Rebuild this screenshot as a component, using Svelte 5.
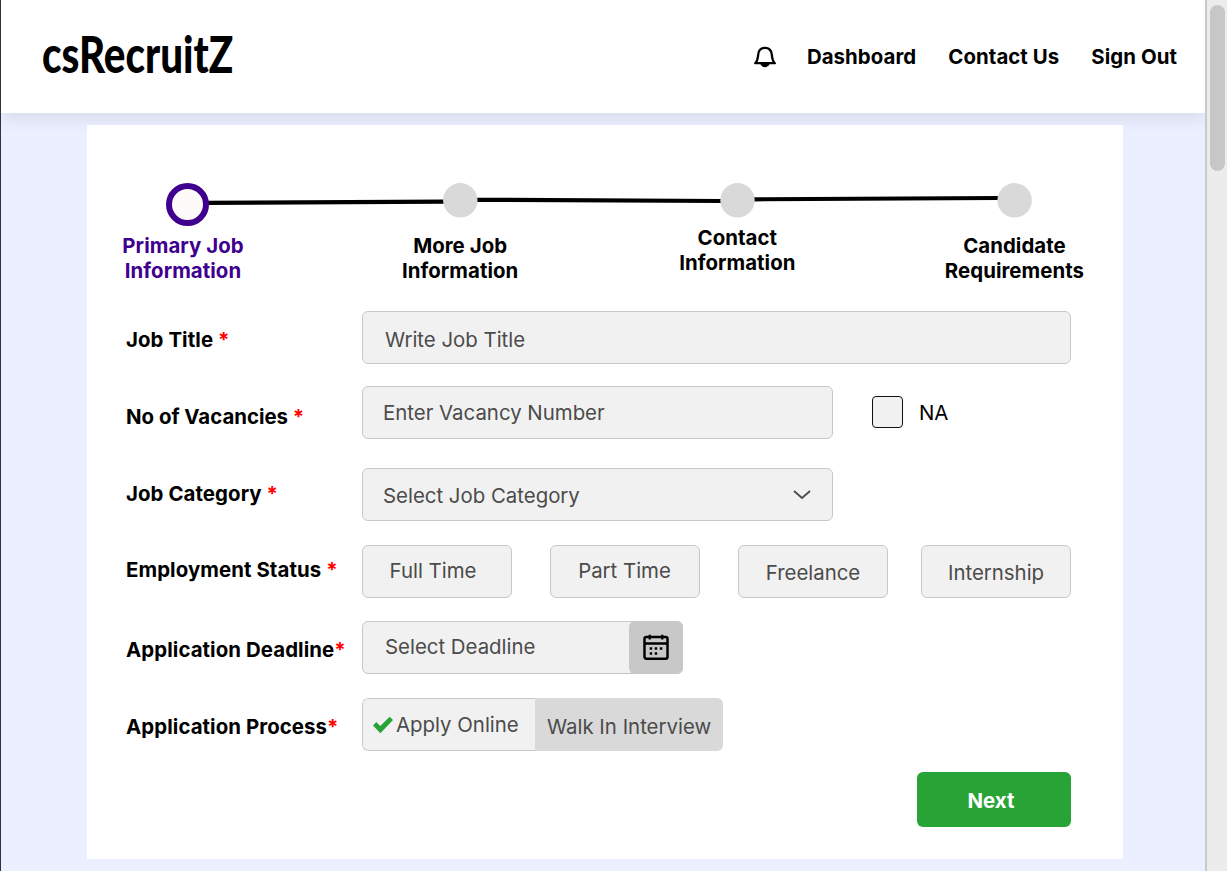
<script>
  const nav = ['Dashboard', 'Contact Us', 'Sign Out'];
  const steps = [
    ['Primary Job', 'Information'],
    ['More Job', 'Information'],
    ['Contact', 'Information'],
    ['Candidate', 'Requirements'],
  ];
</script>

<div class="window">
  <div class="page">
    <header>
      <svg class="logo" width="220" height="64" viewBox="0 0 220 64" role="img" aria-label="csRecruitZ">
        <text transform="translate(1 49) scale(0.73 1)" textLength="262" lengthAdjust="spacingAndGlyphs">csRecruitZ</text>
      </svg>
      <nav>
        <svg class="bell" width="24" height="24" viewBox="0 0 24 24">
          <path d="M2.2 18.2 C4.7 15.7 4.8 13.5 5.2 9.5 C5.6 5 8 2.8 12 2.8 S18.4 5 18.8 9.5 C19.2 13.5 19.3 15.7 21.8 18.2 Z" fill="none" stroke="#000" stroke-width="2.3" stroke-linejoin="round" />
          <path d="M7.4 19 C9 23.2 15 23.2 16.6 19 Z" />
        </svg>
        {#each nav as item}<a href="#top">{item}</a>{/each}
      </nav>
    </header>

    <main>
      <svg class="track" width="1036" height="60" viewBox="87 173 1036 60">
        <g stroke="#000" stroke-width="4.2">
          <path d="M205 202.9 L444 201.6" />
          <path d="M476 199.8 L721 201" />
          <path d="M754 199.3 L998 198" />
        </g>
        <circle cx="187.5" cy="204.5" r="18.5" fill="#fffafa" stroke="#40008f" stroke-width="6" />
        <g fill="#d9d9d9">
          <circle cx="460.3" cy="200.3" r="17.2" />
          <circle cx="737.5" cy="200.3" r="17.2" />
          <circle cx="1014.6" cy="200.3" r="17.2" />
        </g>
      </svg>
      <div class="steps">
        {#each steps as [a, b], i}
          <div class="step" class:active={i === 0} class:raised={i === 2}>{a}<br />{b}</div>
        {/each}
      </div>

      <form>
        <div class="row r1">
          <label for="t">Job Title <i>*</i></label>
          <div class="field wide" id="t"><span>Write Job Title</span></div>
        </div>
        <div class="row r2">
          <label for="v">No of Vacancies <i>*</i></label>
          <div class="field mid" id="v"><span>Enter Vacancy Number</span></div>
          <div class="check"></div>
          <span class="na">NA</span>
        </div>
        <div class="row r3">
          <label for="c">Job Category <i>*</i></label>
          <div class="field mid" id="c">
            <span>Select Job Category</span>
            <svg class="chev" width="20" height="12" viewBox="0 0 20 12"><path d="M2 2 L10 9 L18 2" fill="none" stroke="#4b4b4b" stroke-width="1.8" /></svg>
          </div>
        </div>
        <div class="row r4">
          <label for="s">Employment Status <i>*</i></label>
          <div class="choices" id="s">
            <div class="field choice"><span>Full Time</span></div>
            <div class="field choice"><span>Part Time</span></div>
            <div class="field choice low"><span>Freelance</span></div>
            <div class="field choice low"><span>Internship</span></div>
          </div>
        </div>
        <div class="row r5">
          <label for="d">Application Deadline<i>*</i></label>
          <div class="field date" id="d">
            <span>Select Deadline</span>
            <div class="cal">
              <svg width="26" height="27" viewBox="0 0 26 27">
                <rect x="1.5" y="3" width="23" height="21.7" rx="1.8" fill="none" stroke="#000" stroke-width="2.5" />
                <path d="M2 9.5 H24 M6.7 0.8 V5.5 M19.3 0.8 V5.5" stroke="#000" stroke-width="2.3" />
                <path d="M6.7 14.5 h2.5 M11.7 14.5 h2.5 M16.8 14.5 h2.5 M6.7 19.4 h2.5 M11.7 19.4 h2.5" stroke="#000" stroke-width="2.5" />
              </svg>
            </div>
          </div>
        </div>
        <div class="row r6">
          <label for="p">Application Process<i>*</i></label>
          <div class="toggle" id="p">
            <div class="online">
              <svg width="20" height="18" viewBox="0 0 20 18"><path d="M0 9.5 L3.2 6 L7.3 10 L16.7 0.7 L20 4 L7.4 17.2 Z" fill="#28a437" /></svg>
              <span>Apply Online</span>
            </div>
            <div class="walk"><span>Walk In Interview</span></div>
          </div>
        </div>
      </form>
      <button type="button">Next</button>
    </main>
  </div>
  <div class="scrollbar"><div class="thumb"></div></div>
</div>

<style>
  :global(body) { margin: 0; background: #ebefff; overflow: hidden; }
  .window { display: flex; width: 1227px; height: 871px; font: 400 20.4px/25px Inter, sans-serif; color: #000; box-sizing: border-box; overflow: hidden; }
  .page { width: 1205px; box-sizing: border-box; border-left: 1px solid #333338; background: #ebefff; }
  header { height: 113px; background: #fff; box-shadow: 0 4px 18px rgba(0, 0, 0, 0.1); display: flex; justify-content: space-between; padding: 0 28px 0 40px; box-sizing: border-box; }
  .logo { margin-top: 24px; }
  .logo text { font: 900 51px Lato, sans-serif; }
  nav { display: flex; align-items: center; height: 112px; font-weight: 670; letter-spacing: 0.07px; }
  nav a { color: #000; text-decoration: none; margin-right: 32px; white-space: nowrap; }
  nav a:last-child { margin-right: 0; }
  .bell { margin-right: 30px; margin-top: 1px; }
  main { position: relative; margin: 12px 0 0 86px; width: 1036px; height: 734px; background: #fff; box-sizing: border-box; padding-top: 48px; }
  .track { display: block; }
  .steps { display: flex; justify-content: space-between; width: 971.5px; margin-left: 26px; height: 78px; font-weight: 670; text-align: center; letter-spacing: 0.06px; }
  .step { width: 140px; white-space: nowrap; }
  .active { color: #40008f; }
  .raised { margin-top: -8px; }
  form { display: flex; flex-direction: column; }
  .row { display: flex; height: 53px; margin-left: 39px; }
  label { width: 236px; font-weight: 680; white-space: nowrap; flex: none; padding-top: 16px; box-sizing: border-box; letter-spacing: 0.08px; }
  label i { color: #f00; font-style: normal; }
  .field { box-sizing: border-box; height: 53px; border: 1px solid #c8c8c8; border-radius: 6px; background: #f1f1f1; color: #4b4b4b; padding: 15px 0 0 22px; display: flex; white-space: nowrap; }
  .wide { width: 709px; }
  .mid { width: 471px; }
  .r2 { margin-top: 22px; }
  .r2 label { padding-top: 18px; letter-spacing: 0; }
  .r2 .field { padding: 13px 0 0 20px; }
  .check { width: 31px; height: 32px; box-sizing: border-box; border: 1px solid #111; border-radius: 4px; background: #f1f1f1; margin: 10px 16px 0 39px; }
  .na { margin-top: 14px; }
  .r3 { margin-top: 29px; }
  .r3 label { padding-top: 13px; }
  .r3 .field { justify-content: space-between; padding: 14px 0 0 20px; }
  .chev { margin: 6px 20px 0 0; }
  .r4 { margin-top: 24px; }
  .r4 label { padding-top: 12px; }
  .choices { display: grid; grid-template-columns: 150px 150px 150px 150px; column-gap: 38px; width: 709px; }
  .choice { width: 150px; justify-content: center; padding: 12px 8px 0 0; }
  .choice:nth-child(2) { padding-right: 1px; }
  .choice:last-child { margin-left: -5px; }
  .choice.low { padding: 14px 0 0 0; }
  .r5 { margin-top: 23px; }
  .r5 .field { padding: 12px 0 0 22px; }
  .date { width: 321px; justify-content: space-between; }
  .cal { width: 54px; height: 53px; margin: -13px -1px 0 0; border-radius: 6px; background: #c8c8c8; display: flex; align-items: center; justify-content: center; flex: none; }
  .cal svg { margin-top: -1px; }
  .r6 { margin-top: 24px; }
  .toggle { display: flex; width: 361px; border-radius: 6px; overflow: hidden; color: #4b4b4b; white-space: nowrap; }
  .online { width: 173px; box-sizing: border-box; border: 1px solid #c8c8c8; border-right: 0; border-radius: 6px 0 0 6px; background: #f1f1f1; display: flex; padding: 13px 0 0 10px; }
  .online svg { margin: 4px 3px 0 0; flex: none; }
  .walk { flex: 1; background: #d9d9d9; padding: 16px 0 0 12px; }
  button { display: block; width: 154px; height: 55px; margin: 21px 0 0 830px; padding: 2px 6px 0 0; border: 0; border-radius: 6px; background: #28a437; color: #fff; font: 700 20.4px/25px Inter, sans-serif; }
  .scrollbar { width: 22px; box-sizing: border-box; border-left: 2px solid #c9c9cc; background: #ececec; padding: 5px 0 0 3px; }
  .thumb { width: 15px; height: 166px; border-radius: 8px; background: #c7c7c7; }
</style>
